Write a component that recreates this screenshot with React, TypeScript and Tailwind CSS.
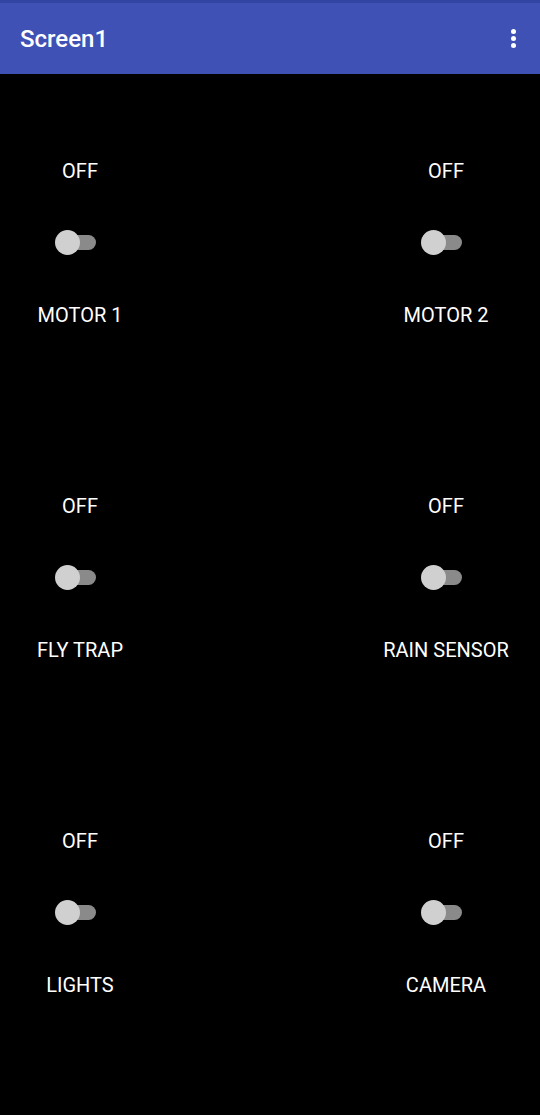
import React from 'react';

type Control = { label: string };

const rows: Control[][] = [
  [{ label: 'MOTOR 1' }, { label: 'MOTOR 2' }],
  [{ label: 'FLY TRAP' }, { label: 'RAIN SENSOR' }],
  [{ label: 'LIGHTS' }, { label: 'CAMERA' }],
];

const Toggle: React.FC = () => (
  <div className="relative h-[30px] w-[42px]">
    <div className="absolute left-[5px] top-[8px] h-[15px] w-[36px] rounded-full bg-[#8a8a8a]" />
    <div className="absolute left-0 top-[3px] h-[25px] w-[25px] rounded-full bg-[#d0d0d0]" />
  </div>
);

const SwitchCell: React.FC<{ item: Control }> = ({ item }) => (
  <div className="flex w-[160px] flex-col items-center text-[20px] leading-[24px] text-white">
    <span>OFF</span>
    <div className="mt-[44px] flex w-full justify-start pl-[55px]">
      <Toggle />
    </div>
    <span className="mt-[46px] whitespace-nowrap">{item.label}</span>
  </div>
);

export default function App() {
  return (
    <div className="flex h-[1115px] w-[540px] flex-col bg-black font-['Roboto',sans-serif]">
      <div className="h-[3px] bg-[#3345a3]" />
      <header className="flex h-[71px] items-center justify-between bg-[#3f51b5] pl-[20px] pr-[24px]">
        <h1 className="text-[24px] font-medium leading-none text-white">Screen1</h1>
        <div className="flex flex-col gap-[2px]">
          <span className="h-[5px] w-[5px] rounded-full bg-white" />
          <span className="h-[5px] w-[5px] rounded-full bg-white" />
          <span className="h-[5px] w-[5px] rounded-full bg-white" />
        </div>
      </header>
      <main className="flex flex-col gap-[167px] pt-[85px]">
        {rows.map((row, i) => (
          <div key={i} className="flex justify-between pr-[14px]">
            {row.map((item) => (
              <SwitchCell key={item.label} item={item} />
            ))}
          </div>
        ))}
      </main>
    </div>
  );
}
